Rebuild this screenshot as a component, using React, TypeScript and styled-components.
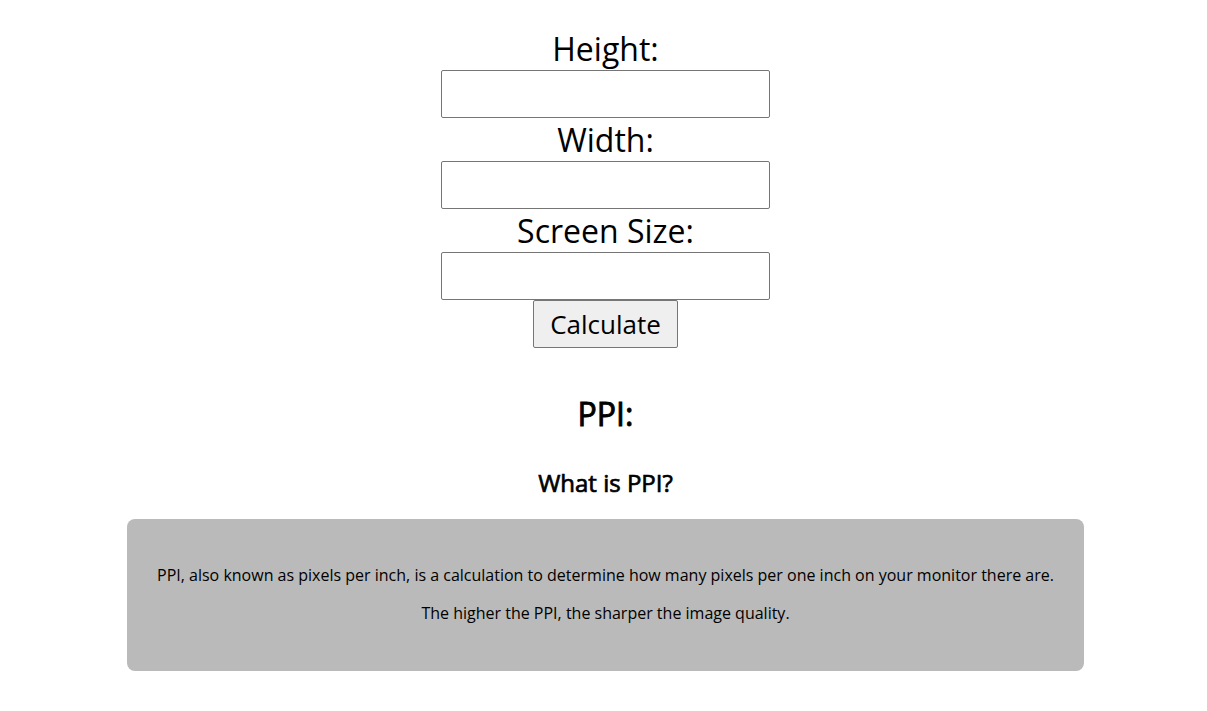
import React from "react";
import styled, { createGlobalStyle } from "styled-components";

const Global = createGlobalStyle`
  html, body { margin: 0; padding: 0; background: #ffffff; }
  body { font-family: "Open Sans", "Liberation Sans", sans-serif; color: #000; }
`;

const Page = styled.div`
  padding: 27px 0 0 4px;
  display: flex;
  flex-direction: column;
  align-items: center;
`;

const Form = styled.form`
  display: flex;
  flex-direction: column;
  align-items: center;
  margin: 0;
`;

const Label = styled.label`
  display: block;
  font-size: 32px;
  line-height: 43px;
  text-align: center;
`;

const Field = styled.input`
  box-sizing: border-box;
  width: 329px;
  height: 48px;
  border: 1px solid #767676;
  border-radius: 2px;
  font-family: inherit;
  font-size: 20px;
  padding: 0 8px;
  margin: 0;
  background: #fff;
`;

const Button = styled.button`
  box-sizing: border-box;
  height: 48px;
  padding: 0 16px;
  margin: 0;
  font-family: inherit;
  font-size: 26px;
  color: #000;
  background: #efefef;
  border: 1px solid #767676;
  border-radius: 2px;
  cursor: pointer;
`;

const Result = styled.h1`
  font-size: 32px;
  font-weight: 400;
  -webkit-text-stroke: 0.9px #000;
  line-height: 43.5px;
  margin: 43.5px 0 0;
  text-align: center;
`;

const Subtitle = styled.h2`
  font-size: 24px;
  font-weight: 400;
  -webkit-text-stroke: 0.7px #000;
  line-height: 32.7px;
  margin: 31.5px 0 20px;
  text-align: center;
`;

const InfoBox = styled.div`
  box-sizing: border-box;
  width: 957px;
  height: 152px;
  background: #bababa;
  border-radius: 8px;
  padding: 30px 20px;
  text-align: center;
`;

const Para = styled.p`
  font-size: 16px;
  line-height: 21.8px;
  margin: 16px 0;
`;

export default function App() {
  return (
    <>
      <Global />
      <Page>
        <Form onSubmit={(e) => e.preventDefault()}>
          <Label htmlFor="h">Height:</Label>
          <Field id="h" type="text" />
          <Label htmlFor="w">Width:</Label>
          <Field id="w" type="text" />
          <Label htmlFor="s">Screen Size:</Label>
          <Field id="s" type="text" />
          <Button type="submit">Calculate</Button>
        </Form>
        <Result>PPI:</Result>
        <Subtitle>What is PPI?</Subtitle>
        <InfoBox>
          <Para>
            PPI, also known as pixels per inch, is a calculation to determine how many pixels per one inch on your monitor there are.
          </Para>
          <Para>The higher the PPI, the sharper the image quality.</Para>
        </InfoBox>
      </Page>
    </>
  );
}
